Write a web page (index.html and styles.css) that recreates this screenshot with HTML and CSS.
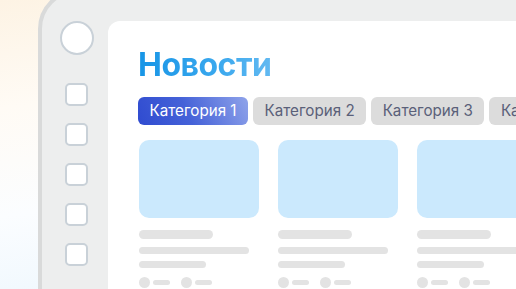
FILE: index.html
```html
<!DOCTYPE html>
<html lang="ru">
<head>
<meta charset="utf-8">
<link rel="stylesheet" href="styles.css">
</head>
<body>
<div class="frame">
  <aside class="sidebar">
    <div class="avatar"></div>
    <div class="check"></div>
    <div class="check"></div>
    <div class="check"></div>
    <div class="check"></div>
    <div class="check"></div>
  </aside>
  <main class="panel">
    <h1 class="title">Новости</h1>
    <nav class="tabs">
      <span class="tab active">Категория 1</span>
      <span class="tab">Категория 2</span>
      <span class="tab">Категория 3</span>
      <span class="tab">Категория 4</span>
    </nav>
    <section class="cards">
      <article class="card">
        <div class="thumb"></div>
        <div class="line l1"></div>
        <div class="line l2"></div>
        <div class="line l3"></div>
        <div class="meta"><span class="dot"></span><span class="pill"></span><span class="dot"></span><span class="pill"></span></div>
      </article>
      <article class="card">
        <div class="thumb"></div>
        <div class="line l1"></div>
        <div class="line l2"></div>
        <div class="line l3"></div>
        <div class="meta"><span class="dot"></span><span class="pill"></span><span class="dot"></span><span class="pill"></span></div>
      </article>
      <article class="card">
        <div class="thumb"></div>
        <div class="line l1"></div>
        <div class="line l2"></div>
        <div class="line l3"></div>
        <div class="meta"><span class="dot"></span><span class="pill"></span><span class="dot"></span><span class="pill"></span></div>
      </article>
    </section>
  </main>
</div>
</body>
</html>
```

FILE: styles.css
```css
html, body {
  margin: 0;
  padding: 0;
}
body {
  width: 516px;
  height: 289px;
  overflow: hidden;
  font-family: Inter, "Noto Sans", sans-serif;
  background: linear-gradient(172deg, #fdf3e4 0%, #fffbf5 30%, #fbfdff 60%, #e9f5fd 100%);
}
.frame {
  display: flex;
  margin: -11px 0 0 38px;
  width: 520px;
  height: 340px;
  box-sizing: border-box;
  border: 4px solid #d9dada;
  border-radius: 40px;
  background: #edeeee;
  padding-top: 28px;
}
.sidebar {
  width: 66px;
  flex: none;
  box-sizing: border-box;
  padding-left: 3px;
  display: flex;
  flex-direction: column;
  align-items: center;
}
.avatar {
  width: 34px;
  height: 34px;
  box-sizing: border-box;
  border-radius: 50%;
  border: 2px solid #c9d1d8;
  background: #fff;
  margin-bottom: 28px;
}
.check {
  width: 23px;
  height: 23px;
  box-sizing: border-box;
  border-radius: 5px;
  border: 2px solid #c9d1d8;
  background: #fff;
  margin-bottom: 17px;
}
.panel {
  flex: 1;
  background: #fff;
  border-top-left-radius: 12px;
  padding: 28px 0 0 30px;
  overflow: hidden;
}
.title {
  margin: 0;
  font-size: 32px;
  line-height: 32px;
  font-weight: 700;
  letter-spacing: -0.5px;
  background: linear-gradient(90deg, #1795e6 0%, #3aa8ee 60%, #62b9f1 100%);
  -webkit-background-clip: text;
  background-clip: text;
  color: transparent;
  display: inline-block;
}
.tabs {
  display: flex;
  gap: 5px;
  margin-top: 16px;
  white-space: nowrap;
}
.tab {
  flex: none;
  height: 28px;
  line-height: 28px;
  padding: 0 11.5px;
  border-radius: 6px;
  background: #dcdcdc;
  color: #5a6079;
  font-size: 15.2px;
}
.tab.active {
  background: linear-gradient(65deg, #2f4bd0 0%, #4562d8 45%, #8fa3ea 100%);
  color: #fff;
}
.cards {
  display: flex;
  gap: 19px;
  margin-top: 15px;
  padding-left: 1px;
}
.card {
  flex: none;
  width: 120px;
  display: flex;
  flex-direction: column;
  align-items: flex-start;
}
.thumb {
  width: 120px;
  height: 78px;
  border-radius: 10px;
  background: #cbe9fd;
}
.line {
  background: #e3e3e3;
  border-radius: 5px;
  flex: none;
}
.l1 { width: 74px; height: 9px; margin-top: 12px; }
.l2 { width: 110px; height: 7px; margin-top: 8px; }
.l3 { width: 67px; height: 7px; margin-top: 7px; }
.meta {
  display: flex;
  align-items: center;
  margin-top: 9px;
}
.dot {
  width: 11px;
  height: 11px;
  border-radius: 50%;
  background: #e3e3e3;
  margin-right: 3px;
}
.pill {
  width: 17px;
  height: 5px;
  border-radius: 3px;
  background: #e3e3e3;
  margin-right: 11px;
}
```
